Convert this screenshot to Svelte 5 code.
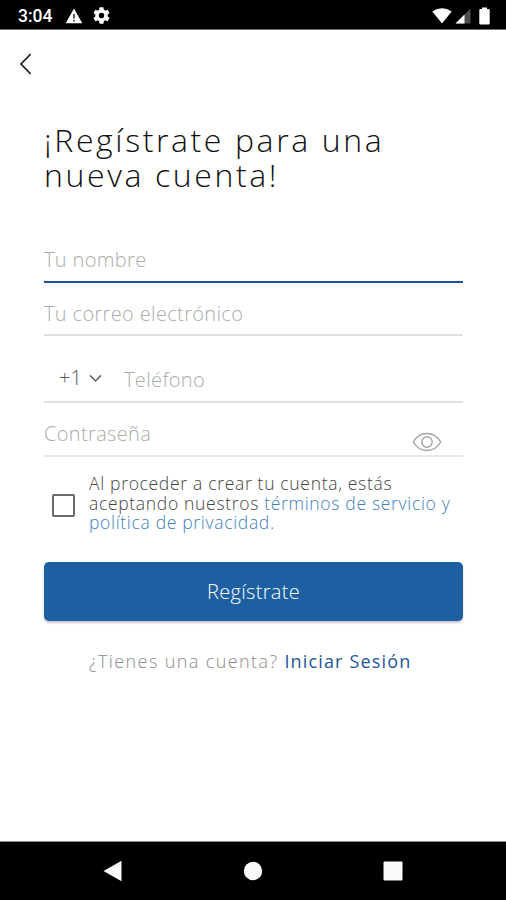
<script lang="ts">
  let name = $state('');
  let email = $state('');
  let phone = $state('');
  let password = $state('');
  let accepted = $state(false);
  let showPassword = $state(false);
</script>

<div class="screen">
  <div class="status-bar">
    <span class="time">3:04</span>
    <svg class="warning" width="18" height="16" viewBox="0 0 18 16">
      <path d="M9 0.5 L17.3 15.3 H0.7 Z" fill="#fff" />
      <path d="M9 6 V10.4 M9 11.8 V13.6" stroke="#333" stroke-width="1.6" />
    </svg>
    <svg class="gear" width="17" height="17" viewBox="2 2 20 20">
      <path fill="#fff" d="M19.14 12.94c.04-.3.06-.61.06-.94s-.02-.64-.07-.94l2.03-1.58a.49.49 0 0 0 .12-.61l-1.92-3.32a.49.49 0 0 0-.59-.22l-2.39.96a7 7 0 0 0-1.62-.94l-.36-2.54a.48.48 0 0 0-.48-.41h-3.84a.47.47 0 0 0-.47.41l-.36 2.54c-.59.24-1.13.57-1.62.94l-2.39-.96a.48.48 0 0 0-.59.22L2.74 8.87a.47.47 0 0 0 .12.61l2.03 1.58c-.05.3-.09.63-.09.94s.02.64.07.94l-2.03 1.58a.49.49 0 0 0-.12.61l1.92 3.32c.12.22.37.29.59.22l2.39-.96c.5.38 1.03.7 1.62.94l.36 2.54c.05.24.24.41.48.41h3.84c.24 0 .44-.17.47-.41l.36-2.54a7 7 0 0 0 1.62-.94l2.39.96c.22.08.47 0 .59-.22l1.92-3.32a.47.47 0 0 0-.12-.61zM12 15.2a3.2 3.2 0 1 1 0-6.4 3.2 3.2 0 0 1 0 6.4z" />
    </svg>
    <div class="signals">
      <svg width="20" height="16" viewBox="0 0 20 16">
        <path d="M0.3 3.4 Q10 -3 19.7 3.4 L10 15.6 Z" fill="#fff" />
      </svg>
      <svg width="16" height="16" viewBox="0 0 16 16">
        <path d="M15.5 0.5 V15.5 H0.5 Z" fill="#4d4d4d" />
        <path d="M9.5 6.5 V15.5 H0.5 Z" fill="#fff" />
      </svg>
      <svg class="battery" width="11" height="18" viewBox="0 0 11 18">
        <path d="M3 0.5 H8 V2 H9.5 Q10.7 2 10.7 3.2 V16.3 Q10.7 17.5 9.5 17.5 H1.5 Q0.3 17.5 0.3 16.3 V3.2 Q0.3 2 1.5 2 H3 Z" fill="#fff" />
      </svg>
    </div>
  </div>

  <main>
    <button class="back" aria-label="Atrás">
      <svg width="14" height="22" viewBox="0 0 14 22">
        <path d="M11.6 1.2 L2 11 L11.6 20.8" fill="none" stroke="#222" stroke-width="1.7" />
      </svg>
    </button>

    <h1>¡Regístrate para una<br />nueva cuenta!</h1>

    <form onsubmit={(e) => e.preventDefault()}>
      <div class="field name">
        <input placeholder="Tu nombre" bind:value={name} />
      </div>
      <div class="field email">
        <input type="email" placeholder="Tu correo electrónico" bind:value={email} />
      </div>
      <div class="field phone">
        <button type="button" class="prefix">
          <span>+1</span>
          <svg width="13" height="9" viewBox="0 0 13 9">
            <path d="M1 1.4 L6.5 7 L12 1.4" fill="none" stroke="#666" stroke-width="1.5" />
          </svg>
        </button>
        <input type="tel" placeholder="Teléfono" bind:value={phone} />
      </div>
      <div class="field password">
        <input
          type={showPassword ? 'text' : 'password'}
          placeholder="Contraseña"
          bind:value={password}
        />
        <button
          type="button"
          class="eye"
          aria-label="Mostrar"
          onclick={() => (showPassword = !showPassword)}
        >
          <svg width="30" height="20" viewBox="0 0 30 20">
            <g fill="none" stroke="#a3a3a3" stroke-width="1.4">
              <path d="M1.3 10 C8 -1.3 22 -1.3 28.7 10 C22 21.3 8 21.3 1.3 10 Z" />
              <circle cx="15" cy="10" r="5.2" />
            </g>
          </svg>
        </button>
      </div>

      <label class="terms">
        <input type="checkbox" bind:checked={accepted} />
        <span>
          Al proceder a crear tu cuenta, estás<br />
          aceptando nuestros <a href="#terms">términos de servicio y<br />
          política de privacidad.</a>
        </span>
      </label>

      <button class="submit">Regístrate</button>
    </form>

    <p class="login">
      <span>¿Tienes una cuenta?</span>
      <a href="#login">Iniciar Sesión</a>
    </p>
  </main>

  <nav class="nav-bar">
    <svg width="20" height="22" viewBox="0 0 20 22"><path d="M0.5 11 L18.5 0.8 V21.2 Z" fill="#fafafa" /></svg>
    <svg width="20" height="20" viewBox="0 0 20 20"><circle cx="10" cy="10" r="9.2" fill="#fafafa" /></svg>
    <svg width="20" height="20" viewBox="0 0 20 20"><rect x="0.5" y="0.5" width="19" height="19" rx="1" fill="#fafafa" /></svg>
  </nav>
</div>

<style>
  :global(body) { margin: 0; background: #fff; }
  .screen {
    display: flex; flex-direction: column;
    width: 506px; height: 900px; overflow: hidden;
    background: #fff;
    font-family: "Open Sans", "Noto Sans", sans-serif;
    font-weight: 300;
  }
  svg { display: block; flex-shrink: 0; }
  button { border: 0; padding: 0; background: none; font: inherit; cursor: pointer; }
  a { color: #3f7fc0; text-decoration: none; }

  .status-bar {
    display: flex; align-items: center;
    height: 30px; padding: 2px 16px 0 18px; box-sizing: border-box;
    background: #000; border-bottom: 1px solid #6e6e6e;
  }
  .time {
    width: 47px; color: #fff;
    font: 500 17.5px/20px Roboto, sans-serif;
  }
  .gear { margin-left: 10px; }
  .signals { display: flex; align-items: center; gap: 3px; margin-left: auto; }
  .battery { margin-left: 5px; }

  main { flex: 1; padding: 0 43px 0 44px; }
  .back { display: block; margin: 23px 0 0 -25px; }

  h1 {
    margin: 47px 0 0; color: #111;
    font-size: 32px; font-weight: 300; line-height: 35px;
    letter-spacing: 2.6px; white-space: nowrap;
  }

  form { padding-top: 52px; }
  .field { display: flex; box-sizing: border-box; border-bottom: 2px solid #e0e0e0; }
  .field input {
    flex: 1; min-width: 0; height: 30px; padding: 0; border: 0; outline: 0;
    background: none; color: #333;
    font: inherit; font-size: 20px; letter-spacing: 0.35px;
  }
  .field input::placeholder { color: #acacac; opacity: 1; }
  .name { height: 39px; border-color: #1e509f; }
  .email { height: 53px; padding-top: 15px; }
  .phone { height: 67px; padding-top: 28px; }
  .password { height: 54px; padding-top: 15px; border-color: #e8e8e8; }
  .prefix {
    display: flex; align-items: center; gap: 7px;
    width: 80px; height: 28px; padding-left: 15px; box-sizing: border-box;
    color: #555; font-size: 20px; line-height: 28px;
  }
  .eye { width: 30px; height: 20px; margin: 14px 21px 0 0; }

  .terms {
    display: flex; margin-top: 17px;
    color: #444; font-size: 17.5px; line-height: 19.7px; white-space: nowrap;
    letter-spacing: 0.68px;
  }
  .terms input {
    appearance: none; flex-shrink: 0;
    width: 23px; height: 23px; margin: 20px 14px 0 8px;
    border: 2px solid #6a6a6a; border-radius: 2px;
  }
  .terms input:checked { background: #1d60a1; }

  .submit {
    display: block; width: 100%; height: 59px; margin-top: 29px;
    border-radius: 5px; background: #1d60a1; color: #fff;
    font-size: 20px; letter-spacing: 0.3px;
    box-shadow: 0 2px 2px rgba(60, 30, 60, 0.25);
  }

  .login {
    display: flex; gap: 6px; margin: 28px 0 0 45px;
    color: #8c8c8c; font-size: 18px; line-height: 24px; white-space: nowrap;
    letter-spacing: 1.4px;
  }
  .login a { color: #1d569b; font-weight: 400; letter-spacing: 1.15px; }

  .nav-bar {
    display: flex; justify-content: space-between; align-items: center;
    height: 59px; padding: 0 103px 1px; box-sizing: border-box;
    background: #000; border-top: 1px solid #8a8a8a;
  }
</style>
